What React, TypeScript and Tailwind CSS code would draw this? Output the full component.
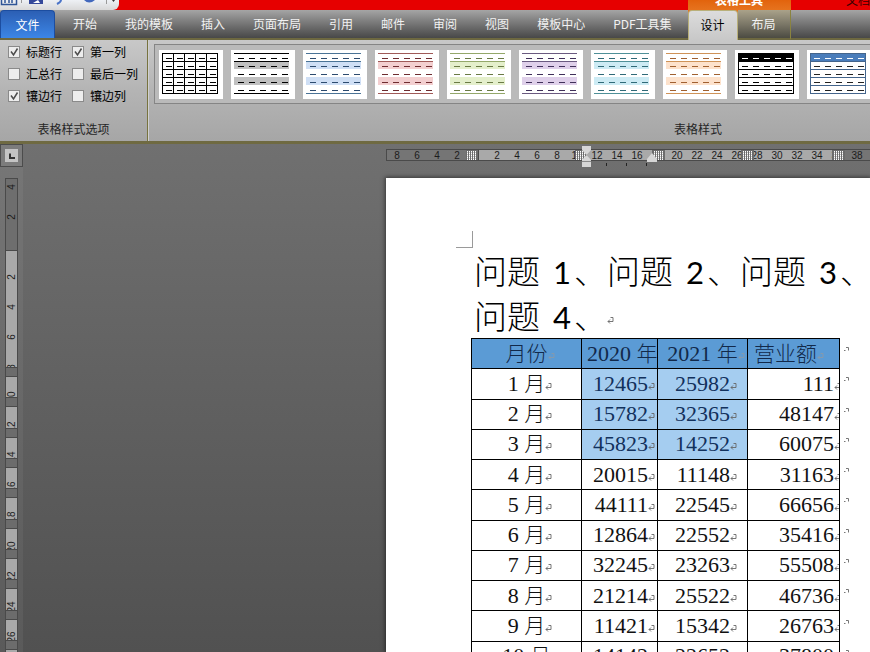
import React from "react";

const UI = "font-['Noto_Sans_CJK_SC',sans-serif]";

const tabs = ["开始", "我的模板", "插入", "页面布局", "引用", "邮件", "审阅", "视图", "模板中心", "PDF工具集"];

const options = [
  { label: "标题行", on: true },
  { label: "第一列", on: true },
  { label: "汇总行", on: false },
  { label: "最后一列", on: false },
  { label: "镶边行", on: true },
  { label: "镶边列", on: false },
];

type StyleKind = "grid" | "banded" | "header";
const gallery: { name: string; kind: StyleKind; line: string; band: string; dash: string }[] = [
  { name: "网格型", kind: "grid", line: "#000", band: "#fff", dash: "#000" },
  { name: "浅色底纹", kind: "banded", line: "#000", band: "#c0c0c0", dash: "#000" },
  { name: "浅色底纹 1", kind: "banded", line: "#4a7396", band: "#cfdff5", dash: "#2c4a6e" },
  { name: "浅色底纹 2", kind: "banded", line: "#a05a58", band: "#f3cfd0", dash: "#6e2c30" },
  { name: "浅色底纹 3", kind: "banded", line: "#94a86a", band: "#e4efcb", dash: "#6a7a45" },
  { name: "浅色底纹 4", kind: "banded", line: "#6a5a80", band: "#dfd0ea", dash: "#40305a" },
  { name: "浅色底纹 5", kind: "banded", line: "#4f9098", band: "#cdebf4", dash: "#306a78" },
  { name: "浅色底纹 6", kind: "banded", line: "#cf9358", band: "#fde2cc", dash: "#a06030" },
  { name: "浅色列表", kind: "header", line: "#000", band: "#000", dash: "#000" },
  { name: "浅色列表 1", kind: "header", line: "#44658c", band: "#4a7dbb", dash: "#222" },
];

const rows = [
  ["1", "12465", "25982", "111"],
  ["2", "15782", "32365", "48147"],
  ["3", "45823", "14252", "60075"],
  ["4", "20015", "11148", "31163"],
  ["5", "44111", "22545", "66656"],
  ["6", "12864", "22552", "35416"],
  ["7", "32245", "23263", "55508"],
  ["8", "21214", "25522", "46736"],
  ["9", "11421", "15342", "26763"],
  ["10", "14142", "22652", "37800"],
];

const hNumbers = ["8", "6", "4", "2", "", "2", "4", "6", "8", "10", "12", "14", "16", "", "20", "22", "24", "26", "28", "30", "32", "34", "36", "38"];
const vNumbers = ["4", "2", "", "2", "4", "6", "8", "10", "12", "14", "16", "18", "20", "22", "24", "26"];

function StyleThumb({ kind, line, band, dash }: { kind: StyleKind; line: string; band: string; dash: string }) {
  const rowsY = [3, 11, 19, 27, 35];
  const cols = [3, 14, 25, 36, 47];
  return (
    <svg width="64" height="49" viewBox="0 0 64 49" shapeRendering="crispEdges" aria-hidden="true">
      <rect width="64" height="49" fill="#fff" />
      {kind === "banded" && (
        <>
          <rect x="3" y="12" width="55" height="7" fill={band} />
          <rect x="3" y="27" width="55" height="8" fill={band} />
          {[3, 11, 43].map((y) => (
            <rect key={y} x="3" y={y} width="55" height="1" fill={line} />
          ))}
        </>
      )}
      {kind === "header" && <rect x="3" y="3" width="56" height="9" fill={band} />}
      {kind !== "banded" &&
        [3, 11, 19, 27, 35, 43].map((y) => <rect key={y} x="3" y={y} width="56" height="1" fill={line} />)}
      {kind === "grid" && [3, 14, 25, 36, 47, 58].map((x) => <rect key={x} x={x} y="3" width="1" height="41" fill={line} />)}
      {kind === "header" && [3, 58].map((x) => <rect key={x} x={x} y="3" width="1" height="41" fill={line} />)}
      {rowsY.map((y, r) =>
        cols.map((x) => (
          <rect key={`${x}-${y}`} x={x + 4} y={y + 5} width="6" height="1" fill={kind === "header" && r === 0 ? "#fff" : dash} />
        ))
      )}
    </svg>
  );
}

function ReturnMark({ className = "" }: { className?: string }) {
  return (
    <svg className={`inline-block h-2 w-[7px] shrink-0 ${className}`} viewBox="0 0 7 8" fill="none" stroke="currentColor" strokeWidth="0.9" aria-hidden="true">
      <path d="M3.5 1.5H6V5.5H1M3 3.5L1 5.5L3 7.5" />
    </svg>
  );
}

function TableStop({ className }: { className: string }) {
  return (
    <div className={`flex h-[11px] shrink-0 items-center justify-center bg-[#6c6c6c] ${className}`}>
      <svg width="10" height="9" shapeRendering="crispEdges" aria-hidden="true">
        {[0, 2, 4, 6, 8].map((x) => <rect key={x} x={x} width="1" height="9" fill="#fff" opacity="0.6" />)}
        {[0, 2, 4, 6, 8].map((x) => [0, 2, 4, 6, 8].map((y) => <rect key={`${x}${y}`} x={x} y={y} width="1" height="1" fill="#fff" />))}
      </svg>
    </div>
  );
}

function TitleAndTabs() {
  return (
    <header className="flex h-10 overflow-hidden bg-[#e60000]">
      <div className="flex shrink-0 flex-col">
        <div className="flex h-[10px]">
          <div className="h-[10px] w-[119px] rounded-br-md bg-linear-to-b from-[#eef1f5] to-[#d8d8d8]">
            <svg width="119" height="10" aria-hidden="true">
              <path d="M1.500 0V4.500H16.500V0M5 0V3M9 0V3M12 0V3" fill="none" stroke="#2f5597" strokeWidth="1.500" />
              <path d="M21.500 0V3M106.500 0V4" stroke="#999" />
              <path d="M29 0H43V4H29Z" fill="#34489a" />
              <path d="M33 3L38 0L40 3Z" fill="#fff" />
              <path d="M61 0Q61 2 57 4" stroke="#4b74c8" strokeWidth="2" fill="none" />
              <path d="M84 0Q89 5 95 0Z" fill="#4268bd" />
              <path d="M112 0H115L113.500 2Z" fill="#333" />
            </svg>
          </div>
        </div>
        <nav className="flex h-[30px] border-b-2 border-[#6d6840] bg-linear-to-b from-[#a5a5a5] via-[#757575] to-[#484848] pr-0.5 text-xs text-[#f2f2f2]">
          <button className="mr-1 h-[28px] w-[55px] rounded-t-sm border border-b-0 border-[#1c4da0] bg-linear-to-b from-[#2c5fb4] to-[#3c86e6] text-white">文件</button>
          {tabs.map((t) => (
            <button key={t} className="px-[14px] whitespace-nowrap">{t}</button>
          ))}
        </nav>
      </div>
      <div className="flex w-[103px] shrink-0 flex-col bg-linear-to-b from-[#e2630c] to-[#f0a040]">
        <div className="flex h-[10px] items-end justify-center text-xs leading-5 font-bold text-white">表格工具</div>
        <nav className="flex h-[30px] text-xs">
          <button className="w-[50px] rounded-t-sm border border-b-0 border-[#b9b07a] bg-linear-to-b from-[#dcdcdc] to-[#c8c8c8] pb-0.5 text-black">设计</button>
          <button className="flex-1 border-r border-b-2 border-r-[#8a8340] border-b-[#6d6840] bg-linear-to-b from-[#aaa28a] via-[#7c7868] to-[#4c4b42] text-[#f2f2f2]">布局</button>
        </nav>
      </div>
      <div className="flex min-w-0 flex-1 flex-col">
        <div className="flex h-[10px] items-end justify-end overflow-hidden text-xs leading-5 text-[#3a0000]">文档</div>
        <div className="h-[30px] border-b-2 border-[#6d6840] bg-linear-to-b from-[#a5a5a5] via-[#757575] to-[#484848]" />
      </div>
    </header>
  );
}

function Ribbon() {
  return (
    <section className="flex h-[104px] shrink-0 overflow-hidden border-b-[3px] border-[#6f6a42] bg-linear-to-b from-[#c8c8c8] via-[#b4b4b4] to-[#a6a6a6] text-xs text-black">
      <div className="flex w-[148px] shrink-0 flex-col justify-between border-r border-[#77733f]">
        <div className="grid grid-cols-[64px_auto] pt-px pl-2">
          {options.map((o) => (
            <label key={o.label} className="flex h-[22px] items-center gap-1.5 whitespace-nowrap">
              <span className="relative grid h-3 w-3 place-items-center">
                <input type="checkbox" defaultChecked={o.on} className="peer h-3 w-3 appearance-none border border-[#8a8a8a] bg-[#ededed]" />
                <svg className="pointer-events-none absolute hidden h-3 w-3 peer-checked:block" viewBox="0 0 12 12" fill="none" stroke="#4c4c4c" strokeWidth="1.500" aria-hidden="true">
                  <path d="M3 5.500L5.500 9L9.500 2.500" />
                </svg>
              </span>
              {o.label}
            </label>
          ))}
        </div>
        <div className="pb-1 text-center text-[#262626]">表格样式选项</div>
      </div>
      <div className="flex w-[1094px] shrink-0 flex-col justify-between border-l border-[#d0d0d0] pt-1 pl-[5px]">
        <div className="flex h-[60px] gap-2 border border-[#858585] bg-[#bababa] px-1 pt-[5px]">
          {gallery.map((g) => (
            <button key={g.name} aria-label={g.name} className="h-[49px] w-16 shrink-0">
              <StyleThumb kind={g.kind} line={g.line} band={g.band} dash={g.dash} />
            </button>
          ))}
        </div>
        <div className="pb-1 text-center text-[#262626]">表格样式</div>
      </div>
    </section>
  );
}

function HorizontalRuler() {
  return (
    <div className="relative h-3 shrink-0 border border-r-0 border-[#4a4a4a] font-['Liberation_Sans',sans-serif] text-[10px] text-[#1c1c1c]">
      <div className="flex h-[10px]">
        <div className="w-[91px] bg-[#757575]" />
        <div className="w-[355px] border-l border-[#4a4a4a] bg-[#a9a9a9]" />
        <div className="flex-1 bg-[#757575]" />
      </div>
      <div className="absolute inset-0 flex overflow-hidden leading-[11px]">
        {hNumbers.map((n, i) => (
          <span key={i} className="w-5 shrink-0 text-center">{n}</span>
        ))}
      </div>
      <div className="absolute inset-0 flex overflow-hidden">
        <TableStop className="ml-[79px] w-3" />
        <TableStop className="ml-[97px] w-3" />
        <TableStop className="ml-[65px] w-[13px]" />
        <TableStop className="ml-[76px] w-[13px]" />
        <TableStop className="ml-[78px] w-[13px]" />
      </div>
      <svg className="absolute -top-1 left-[193px]" width="80" height="22" aria-hidden="true">
        <path d="M2 0H11V4L6.500 9L2 4Z" fill="#d6d6d6" />
        <path d="M2 14L6.500 9L11 14V21H2Z" fill="#d6d6d6" />
        <path d="M2 15.500H11" stroke="#8a8a8a" />
        <path d="M67 16V13L72 7L77 13V16Z" fill="#d6d6d6" />
        <path d="M26.500 17V20M46.500 17V20M66.500 17V20" stroke="#222" />
      </svg>
    </div>
  );
}

function VerticalRuler() {
  const bands = Array.from({ length: 10 }, (_, i) => i);
  return (
    <div className="relative ml-[5px] w-[13px] flex-1 overflow-hidden border border-b-0 border-[#4a4a4a] bg-[#a9a9a9] font-['Liberation_Sans',sans-serif] text-[10px] text-[#1c1c1c]">
      <div className="absolute inset-x-0 top-0 h-[72px] border-b border-[#4a4a4a] bg-[#6e6e6e]" />
      <div className="absolute inset-x-0 top-0">
        <div className="-mt-[7px] flex flex-col">
          {vNumbers.map((n, i) => (
            <span key={i} className="flex h-[30px] items-center justify-center">
              <span className="-rotate-90 leading-none">{n}</span>
            </span>
          ))}
        </div>
      </div>
      <div className="absolute inset-x-0 top-[188px] flex h-[283px] flex-col justify-between">
        {bands.map((b) => (
          <div key={b} className="h-[10px] border-y border-[#4a4a4a] bg-[#6c6c6c]" />
        ))}
      </div>
    </div>
  );
}

function RowEnd() {
  return (
    <svg className="mb-2 block" width="5" height="5" fill="none" stroke="#777" strokeWidth="1" aria-hidden="true">
      <path d="M0 3.500H1.500M2 0.500H4.500V3.500" />
    </svg>
  );
}

function DocTable() {
  const cell = "border border-black p-0 align-middle";
  return (
    <table className="-ml-[5px] h-[334px] w-[379px] table-fixed border-collapse font-['Liberation_Serif','Noto_Sans_CJK_SC',serif] text-[22px] leading-6 text-[#111]">
      <colgroup>
        <col className="w-[110px]" />
        <col className="w-[76px]" />
        <col className="w-[90px]" />
        <col className="w-[92px]" />
        <col className="w-[11px]" />
      </colgroup>
      <tbody>
        <tr className="bg-[#5b9bd5] text-[#12294a]">
          <th className={`${cell} font-light`}><span className="text-[21px]">月份</span><ReturnMark className="-mr-[7px] text-[#8a9aa8]" /></th>
          <th className={`${cell} overflow-hidden pl-[5px] text-left font-light whitespace-nowrap`}>2020 <span className="text-[21px]">年</span></th>
          <th className={`${cell} font-light whitespace-nowrap`}>2021 <span className="text-[21px]">年</span><ReturnMark className="-mr-[7px] text-[#8a9aa8]" /></th>
          <th className={`${cell} pl-[6px] text-left font-light whitespace-nowrap`}><span className="text-[21px]">营业额</span><ReturnMark className="text-[#8a9aa8]" /></th>
          <td className="bg-white p-0 pl-1 align-middle"><RowEnd /></td>
        </tr>
        {rows.map((r, i) => {
          const picked = i < 3 ? "bg-[#a5cdf0] text-[#12315c]" : "";
          return (
            <tr key={r[0]}>
              <td className={`${cell} text-center font-light whitespace-nowrap`}>{r[0]} <span className="text-[21px]">月</span><ReturnMark className="-mr-[7px] text-[#666]" /></td>
              <td className={`${cell} ${picked} pr-[9px] text-right whitespace-nowrap`}>{r[1]}<ReturnMark className="-mr-[7px] text-[#666]" /></td>
              <td className={`${cell} ${picked} pr-[17px] text-right whitespace-nowrap`}>{r[2]}<ReturnMark className="-mr-[7px] text-[#666]" /></td>
              <td className={`${cell} text-right whitespace-nowrap`}>
                <div className="overflow-hidden pr-[5px]">{r[3]}<ReturnMark className="-mr-[7px] text-[#666]" /></div>
              </td>
              <td className="p-0 pl-1 align-middle"><RowEnd /></td>
            </tr>
          );
        })}
      </tbody>
    </table>
  );
}

function Page() {
  const digit = "mr-[3px] ml-[13px] inline-block w-[18px] text-center font-['Lato',sans-serif] text-[31px] leading-[31px] font-normal";
  return (
    <main className="min-h-0 flex-1 overflow-hidden bg-white pl-[90px] shadow-[0_0_4px_1px_rgba(0,0,0,0.5)]">
      <div className="mt-[53px] -ml-5 h-[17px] w-[17px] border-r border-b border-[#9a9a9a]" />
      <h1 className="-ml-0.5 font-['Noto_Sans_CJK_SC',sans-serif] text-[33px] leading-[45px] font-light whitespace-nowrap text-black">
        问题<span className={digit}>1</span>、问题<span className={digit}>2</span>、问题<span className={digit}>3</span>、
        <br />
        问题<span className={digit}>4</span>、<ReturnMark className="text-[#666]" />
      </h1>
      <DocTable />
    </main>
  );
}

export default function App() {
  return (
    <div className={`flex h-screen flex-col overflow-hidden ${UI}`}>
      <TitleAndTabs />
      <Ribbon />
      <div className="flex min-h-0 flex-1 bg-linear-to-b from-[#707070] to-[#515151]">
        <aside className="flex w-[23px] shrink-0 flex-col bg-white/5">
          <button aria-label="制表符" className="mb-[11px] grid h-[23px] w-[23px] shrink-0 place-items-center border border-[#4c4c4c] bg-[#7c7c7c]">
            <svg width="13" height="13" aria-hidden="true">
              <rect width="13" height="13" fill="#c4c4c4" />
              <path d="M5 4.500V9H10" fill="none" stroke="#333" strokeWidth="2" />
            </svg>
          </button>
          <VerticalRuler />
        </aside>
        <div className="flex min-w-0 flex-1 flex-col pt-[5px] pl-[363px]">
          <HorizontalRuler />
          <div className="h-[17px] shrink-0" />
          <Page />
        </div>
      </div>
    </div>
  );
}
